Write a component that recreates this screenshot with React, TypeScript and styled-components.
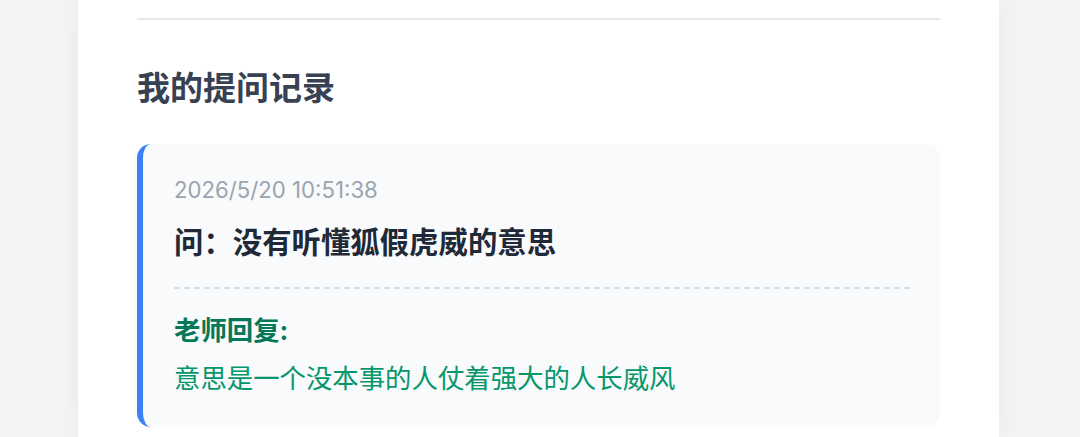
import React from 'react';
import styled, { createGlobalStyle } from 'styled-components';

const GlobalStyle = createGlobalStyle`
  html, body {
    margin: 0;
    padding: 0;
    background: #f3f4f6;
    font-family: Inter, "Noto Sans CJK SC", sans-serif;
  }
  * { box-sizing: border-box; }
`;

const Page = styled.div`
  min-height: 437px;
  height: 437px;
  overflow: hidden;
  background: #f3f4f6;
  padding-left: 78px;
`;

const Panel = styled.div`
  width: 921px;
  min-height: 437px;
  background: #ffffff;
  padding: 0 59px;
  box-shadow: 0 0 28px rgba(0, 0, 0, 0.05);
`;

const PrevSection = styled.div`
  height: 20px;
  border-bottom: 2px solid #e5e7eb;
`;

const Title = styled.h2`
  margin: 46px 0 33px;
  font-size: 33px;
  line-height: 45px;
  font-weight: 700;
  color: #374151;
`;

const RecordCard = styled.div`
  background: #f8fafc;
  border-left: 6px solid #3b82f6;
  border-radius: 14px;
  padding: 31px 30px 30px 31px;
`;

const Time = styled.div`
  font-size: 22.2px;
  line-height: 30px;
  color: #9ca3af;
`;

const Question = styled.div`
  margin-top: 18px;
  font-size: 29.4px;
  line-height: 40px;
  font-weight: 600;
  color: #1f2937;
  padding-bottom: 24px;
  border-bottom: 2px dashed #d9dde3;
`;

const ReplyLabel = styled.div`
  margin-top: 23px;
  font-size: 26.4px;
  line-height: 36px;
  font-weight: 700;
  color: #047857;
`;

const ReplyText = styled.div`
  margin-top: 11px;
  font-size: 26.4px;
  line-height: 38px;
  color: #059669;
`;

const records = [
  {
    time: '2026/5/20 10:51:38',
    question: '没有听懂狐假虎威的意思',
    reply: '意思是一个没本事的人仗着强大的人长威风',
  },
];

export default function App() {
  return (
    <>
      <GlobalStyle />
      <Page>
        <Panel>
          <PrevSection />
          <Title>我的提问记录</Title>
          {records.map((r) => (
            <RecordCard key={r.time}>
              <Time>{r.time}</Time>
              <Question>问：{r.question}</Question>
              <ReplyLabel>老师回复:</ReplyLabel>
              <ReplyText>{r.reply}</ReplyText>
            </RecordCard>
          ))}
        </Panel>
      </Page>
    </>
  );
}
